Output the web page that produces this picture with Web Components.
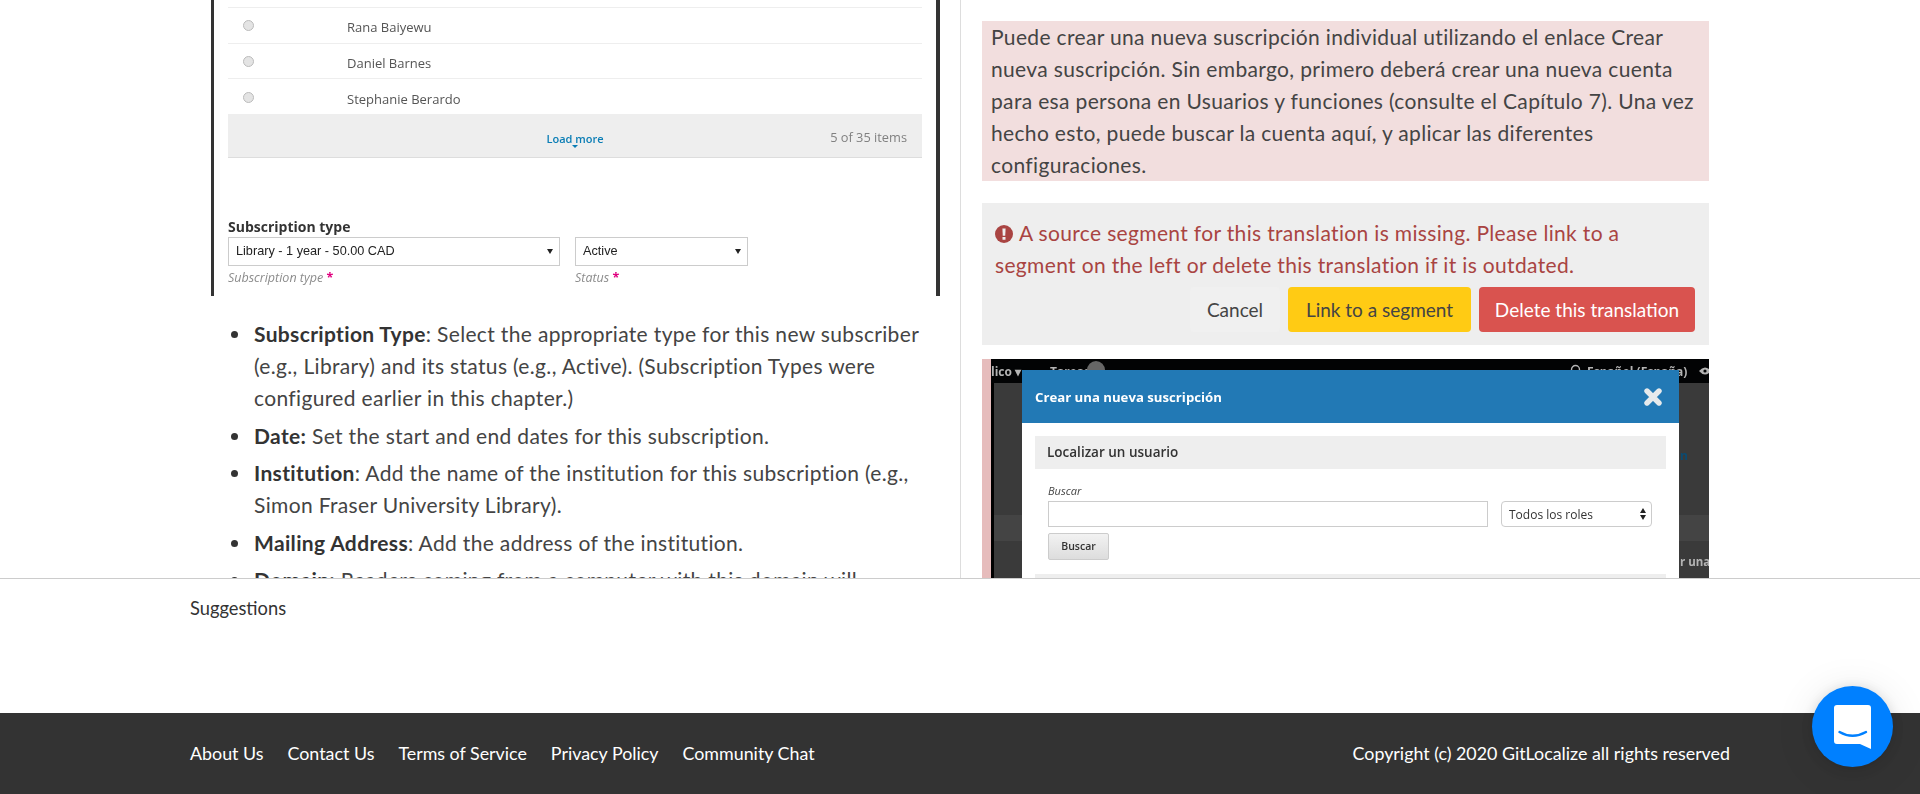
<!DOCTYPE html>
<html>
<head>
<meta charset="utf-8">
<title>GitLocalize</title>
<style>
    html, body{ margin: 0; padding: 0; background: #fff; }
    body{ font-family: "Lato", "Liberation Sans", sans-serif; color: #444; width: 1920px; height: 794px; overflow: hidden; position: relative; }
    gl-li b{ font-weight: 700; color: #333; }
</style>
</head>
<body>
<gl-editor>
    <div slot="left">
        <shot-subscription></shot-subscription>
        <gl-list>
            <gl-li><b>Subscription Type</b>: Select the appropriate type for this new subscriber (e.g., Library) and its status (e.g., Active). (Subscription Types were configured earlier in this chapter.)</gl-li>
            <gl-li><b>Date:</b> Set the start and end dates for this subscription.</gl-li>
            <gl-li><b>Institution</b>: Add the name of the institution for this subscription (e.g., Simon Fraser University Library).</gl-li>
            <gl-li><b>Mailing Address</b>: Add the address of the institution.</gl-li>
            <gl-li><b>Domain:</b> Readers coming from a computer with this domain will</gl-li>
        </gl-list>
    </div>
    <div slot="right">
        <gl-segment>Puede crear una nueva suscripción individual utilizando el enlace Crear nueva suscripción. Sin embargo, primero deberá crear una nueva cuenta para esa persona en Usuarios y funciones (consulte el Capítulo 7). Una vez hecho esto, puede buscar la cuenta aquí, y aplicar las diferentes configuraciones.</gl-segment>
        <gl-missing>A source segment for this translation is missing. Please link to a segment on the left or delete this translation if it is outdated.</gl-missing>
        <shot-modal></shot-modal>
    </div>
</gl-editor>
<gl-suggestions>Suggestions</gl-suggestions>
<gl-footer>
    <a slot="links">About Us</a>
    <a slot="links">Contact Us</a>
    <a slot="links">Terms of Service</a>
    <a slot="links">Privacy Policy</a>
    <a slot="links">Community Chat</a>
    <span slot="copy">Copyright (c) 2020 GitLocalize all rights reserved</span>
</gl-footer>
<gl-chat></gl-chat>

<script>
class GlEditor extends HTMLElement{
    constructor(){
        super();
        let shadow = this.attachShadow({mode: 'open'});
        shadow.innerHTML = `
            <style>
                :host{
                    display: grid;
                    grid-template-columns: 770px 770px;
                    padding: 0 190px;
                    height: 578px;
                    overflow: hidden;
                    border-bottom: 1px solid #ccc;
                }
                .left{ padding: 0 20px 0 21px; min-width: 0; }
                .right{ border-left: 1px solid #ddd; padding: 21px 21px 0 21px; min-width: 0; }
            </style>
            <div class="left"><slot name="left"></slot></div>
            <div class="right"><slot name="right"></slot></div>`;
    }
}

class ShotSubscription extends HTMLElement{
    constructor(){
        super();
        let shadow = this.attachShadow({mode: 'open'});
        let rows = ['Rana Baiyewu', 'Daniel Barnes', 'Stephanie Berardo'].map(name => `
            <div class="row"><i class="radio"></i><span>${name}</span></div>`).join('');
        shadow.innerHTML = `
            <style>
                :host{
                    display: block;
                    box-sizing: border-box;
                    height: 296px;
                    border-left: 3px solid #333;
                    border-right: 4px solid #333;
                    padding: 0 14px;
                    font-family: "Open Sans", sans-serif;
                    color: #555;
                }
                .blur{ filter: blur(0.3px); }
                .cut{ height: 7px; border-bottom: 1px solid #eee; }
                .row{
                    display: flex;
                    align-items: center;
                    height: 34.67px;
                    border-bottom: 1px solid #eee;
                    padding-left: 15px;
                    font-size: 13px;
                }
                .row span{ margin-left: 93px; padding-top: 4px; }
                .radio{
                    box-sizing: border-box;
                    width: 11px;
                    height: 11px;
                    margin-top: 1px;
                    border-radius: 50%;
                    background: #e4e4e4;
                    border: 1px solid #bbb;
                }
                .more{
                    display: grid;
                    grid-template-columns: 1fr auto 1fr;
                    height: 42px;
                    background: #eee;
                    border-bottom: 1px solid #ddd;
                }
                .load{
                    grid-column: 2;
                    margin-top: 17px;
                    font-size: 11px;
                    font-weight: 600;
                    color: #0a7db5;
                    line-height: 14px;
                    text-align: center;
                }
                .load i{
                    display: block;
                    width: 0;
                    margin: -1px auto 0;
                    border: 3px solid transparent;
                    border-top-color: #0a7db5;
                    border-bottom: 0;
                }
                .count{
                    grid-column: 3;
                    justify-self: end;
                    margin: 14px 15px 0 0;
                    font-size: 12.8px;
                    line-height: 16px;
                    color: #808080;
                }
                h4{
                    margin: 59px 0 0;
                    font-size: 14px;
                    line-height: 19px;
                    font-weight: 700;
                    color: #333;
                }
                .fields{ display: flex; gap: 15px; margin-top: 1px; }
                .sel{
                    box-sizing: border-box;
                    display: flex;
                    justify-content: space-between;
                    align-items: center;
                    height: 29px;
                    padding: 0 6px 0 7px;
                    border: 1px solid #ccc;
                    font: 12.7px/1 "Liberation Sans", sans-serif;
                    color: #222;
                    background: #fff;
                }
                .sel i{ width: 0; border: 3px solid transparent; border-top: 5px solid #222; border-bottom: 0; }
                .cap{ display: block; margin-top: 4px; font-size: 12.5px; line-height: 16px; font-style: italic; color: #8c8c8c; }
                .cap b{ color: #e0007f; font-style: normal; font-weight: 700; }
            </style>
            <div class="blur">
                <div class="cut"></div>
                ${rows}
                <div class="more">
                    <div class="load">Load more<i></i></div>
                    <div class="count">5 of 35 items</div>
                </div>
                <h4>Subscription type</h4>
                <div class="fields">
                    <div style="width:332px"><div class="sel">Library - 1 year - 50.00 CAD<i></i></div><span class="cap">Subscription type <b>*</b></span></div>
                    <div style="width:173px"><div class="sel">Active<i></i></div><span class="cap">Status <b>*</b></span></div>
                </div>
            </div>`;
    }
}

class GlList extends HTMLElement{
    constructor(){
        super();
        let shadow = this.attachShadow({mode: 'open'});
        shadow.innerHTML = `
            <style>
                :host{
                    display: block;
                    margin-top: 22px;
                    padding-left: 43px;
                    font-size: 21px;
                    letter-spacing: 0.34px;
                    line-height: 32px;
                }
            </style>
            <slot></slot>`;
    }
}

class GlLi extends HTMLElement{
    constructor(){
        super();
        let shadow = this.attachShadow({mode: 'open'});
        shadow.innerHTML = `
            <style>
                :host{ display: block; position: relative; margin-bottom: 5.6px; }
                .dot{
                    position: absolute;
                    left: -23px;
                    top: 13px;
                    width: 7px;
                    height: 7px;
                    border-radius: 50%;
                    background: #333;
                }
            </style>
            <i class="dot"></i><slot></slot>`;
    }
}

class GlSegment extends HTMLElement{
    constructor(){
        super();
        let shadow = this.attachShadow({mode: 'open'});
        shadow.innerHTML = `
            <style>
                :host{
                    display: block;
                    background: #f2dede;
                    padding-left: 9px;
                    font-size: 21px;
                    letter-spacing: 0.34px;
                    line-height: 32px;
                    color: #444;
                }
            </style>
            <slot></slot>`;
    }
}

class GlMissing extends HTMLElement{
    constructor(){
        super();
        let shadow = this.attachShadow({mode: 'open'});
        shadow.innerHTML = `
            <style>
                :host{
                    display: block;
                    margin-top: 22px;
                    background: #eee;
                    padding: 14px 14px 13px 13px;
                    font-size: 21px;
                    letter-spacing: 0.34px;
                    line-height: 32px;
                }
                .msg{ color: #a94442; }
                svg{ width: 18px; height: 18px; vertical-align: -2px; margin-right: 1px; }
                .actions{ display: flex; justify-content: flex-end; gap: 8px; margin-top: 6px; }
                button{
                    font: inherit;
                    font-size: 19px;
                    letter-spacing: 0;
                    line-height: 43px;
                    height: 45px;
                    padding: 0;
                    border: 1px solid transparent;
                    border-radius: 4px;
                    color: #444;
                    background: #f0f0f0;
                }
                .cancel{ width: 90px; }
                .link{ width: 183px; background: #ffcb14; }
                .del{ width: 216px; background: #d9534f; color: #fff; }
            </style>
            <div class="msg">
                <svg viewBox="0 0 18 18"><circle cx="9" cy="9" r="9" fill="#a94442"/><path d="M7.4 3.4h3.2l-.35 7.4H7.75z" fill="#eee"/><rect x="7.5" y="12" width="3" height="2.8" rx=".4" fill="#eee"/></svg>
                <slot></slot>
            </div>
            <div class="actions">
                <button class="cancel">Cancel</button>
                <button class="link">Link to a segment</button>
                <button class="del">Delete this translation</button>
            </div>`;
    }
}

class ShotModal extends HTMLElement{
    constructor(){
        super();
        let shadow = this.attachShadow({mode: 'open'});
        shadow.innerHTML = `
            <style>
                :host{
                    display: block;
                    margin-top: 14px;
                    height: 240px;
                    border-left: 9px solid #e6bcbc;
                    font-family: "Open Sans", sans-serif;
                }
                .stage{
                    position: relative;
                    height: 100%;
                    overflow: hidden;
                    background: linear-gradient(90deg, #000 3px, #3a3a3a 3px);
                    filter: blur(0.3px);
                }
                .band{ height: 24px; background: #020304; }
                .stripe{ position: absolute; left: 3px; right: 0; top: 156px; height: 26px; background: #444; }
                .bg{ position: absolute; font-size: 12px; font-weight: 700; line-height: 14px; color: #b4b4b4; white-space: nowrap; }
                .badge{ position: absolute; left: 96px; top: 2px; width: 18px; height: 18px; border-radius: 50%; background: #666; }
                .lens{ position: absolute; left: 579px; top: 5px; }
                .eye{ position: absolute; left: 708px; top: 8px; }
                .modal{
                    position: absolute;
                    left: 31px;
                    top: 11px;
                    width: 657px;
                    height: 260px;
                    background: #fff;
                }
                header{
                    display: flex;
                    justify-content: space-between;
                    align-items: center;
                    height: 53px;
                    padding: 0 17px 0 13px;
                    background: #2279b5;
                    color: #fff;
                    font-size: 13.2px;
                    font-weight: 700;
                }
                header svg{ width: 18px; height: 18px; }
                section{ margin: 13px 13px 0; }
                h5{
                    margin: 0;
                    height: 33px;
                    padding-left: 12px;
                    background: #eee;
                    color: #333;
                    font-size: 13.5px;
                    font-weight: 600;
                    line-height: 33px;
                }
                label{ display: block; margin: 15px 0 0 13px; font-size: 11px; line-height: 14px; font-style: italic; color: #444; }
                .search{ display: flex; gap: 13px; margin: 3px 14px 0 13px; }
                .input{ box-sizing: border-box; width: 440px; height: 26px; border: 1px solid #ccc; background: #fff; }
                .select{
                    box-sizing: border-box;
                    display: flex;
                    justify-content: space-between;
                    align-items: center;
                    width: 151px;
                    height: 26px;
                    padding: 0 5px 0 7px;
                    border: 1px solid #ccc;
                    border-radius: 4px;
                    font-size: 12px;
                    color: #333;
                }
                .updown{ width: 6px; height: 12px; }
                .go{
                    box-sizing: border-box;
                    margin: 6px 0 0 13px;
                    width: 61px;
                    height: 27px;
                    border: 1px solid #ccc;
                    border-radius: 2px;
                    background: linear-gradient(#f2f2f2, #ddd);
                    text-align: center;
                    font-size: 10.5px;
                    font-weight: 600;
                    line-height: 25px;
                    color: #333;
                }
                .next{ height: 20px; margin-top: 14px; background: #eee; }
            </style>
            <div class="stage">
                <div class="band"></div>
                <div class="stripe"></div>
                <span class="bg" style="left:0;top:6px">lico &#9662;</span>
                <span class="bg" style="left:59px;top:6px">Tareas</span>
                <i class="badge"></i>
                <svg class="lens" width="12" height="12" viewBox="0 0 12 12"><circle cx="5.5" cy="5.5" r="4" fill="none" stroke="#b4b4b4" stroke-width="1.4"/></svg>
                <span class="bg" style="left:596px;top:6px">Español (España)</span>
                <svg class="eye" width="12" height="8" viewBox="0 0 12 8"><path d="M0 4Q6-3 12 4 6 11 0 4z" fill="#b4b4b4"/><circle cx="6" cy="4" r="1.6" fill="#020304"/></svg>
                <span class="bg" style="left:689px;top:90px;color:#0c4a70">n</span>
                <span class="bg" style="left:689px;top:196px;font-size:11.5px">r una</span>
                <div class="modal">
                    <header>Crear una nueva suscripción
                        <svg viewBox="0 0 18 18"><path d="M3 3l12 12M15 3L3 15" stroke="#e6eaec" stroke-width="5.4" stroke-linecap="round"/></svg>
                    </header>
                    <section>
                        <h5>Localizar un usuario</h5>
                        <label>Buscar</label>
                        <div class="search">
                            <div class="input"></div>
                            <div class="select">Todos los roles<svg class="updown" viewBox="0 0 6 12"><path d="M3 0l3 5H0zM3 12l3-5H0z" fill="#222"/></svg></div>
                        </div>
                        <div class="go">Buscar</div>
                        <div class="next"></div>
                    </section>
                </div>
            </div>`;
    }
}

class GlSuggestions extends HTMLElement{
    constructor(){
        super();
        let shadow = this.attachShadow({mode: 'open'});
        shadow.innerHTML = `
            <style>
                :host{
                    display: block;
                    box-sizing: border-box;
                    height: 134px;
                    padding: 16px 190px 0;
                    font-size: 18.3px;
                    line-height: 26px;
                    color: #333;
                }
            </style>
            <slot></slot>`;
    }
}

class GlFooter extends HTMLElement{
    constructor(){
        super();
        let shadow = this.attachShadow({mode: 'open'});
        shadow.innerHTML = `
            <style>
                :host{
                    display: flex;
                    justify-content: space-between;
                    align-items: center;
                    box-sizing: border-box;
                    height: 81px;
                    padding: 0 190px 2px;
                    background: #333;
                    color: #fff;
                    font-size: 17.85px;
                }
                .links{ display: flex; gap: 24px; }
            </style>
            <div class="links"><slot name="links"></slot></div>
            <slot name="copy"></slot>`;
    }
}

class GlChat extends HTMLElement{
    constructor(){
        super();
        let shadow = this.attachShadow({mode: 'open'});
        shadow.innerHTML = `
            <style>
                :host{
                    position: absolute;
                    left: 1812px;
                    top: 686px;
                    width: 81px;
                    height: 81px;
                    border-radius: 50%;
                    background: #0080ff;
                    box-shadow: 0 1px 12px rgba(0,0,0,.12), 0 4px 40px rgba(0,0,0,.10);
                }
                svg{ display: block; }
            </style>
            <svg width="81" height="81" viewBox="0 0 81 81">
                <path d="M25 19H56a3 3 0 0 1 3 3V63L48 58H25a3 3 0 0 1-3-3V22a3 3 0 0 1 3-3z" fill="#fff"/>
                <path d="M27.5 46Q40.5 53.5 54 46" fill="none" stroke="#0080ff" stroke-width="2.4" stroke-linecap="round"/>
            </svg>`;
    }
}

window.customElements.define('gl-editor', GlEditor);
window.customElements.define('shot-subscription', ShotSubscription);
window.customElements.define('gl-list', GlList);
window.customElements.define('gl-li', GlLi);
window.customElements.define('gl-segment', GlSegment);
window.customElements.define('gl-missing', GlMissing);
window.customElements.define('shot-modal', ShotModal);
window.customElements.define('gl-suggestions', GlSuggestions);
window.customElements.define('gl-footer', GlFooter);
window.customElements.define('gl-chat', GlChat);
</script>
</body>
</html>
